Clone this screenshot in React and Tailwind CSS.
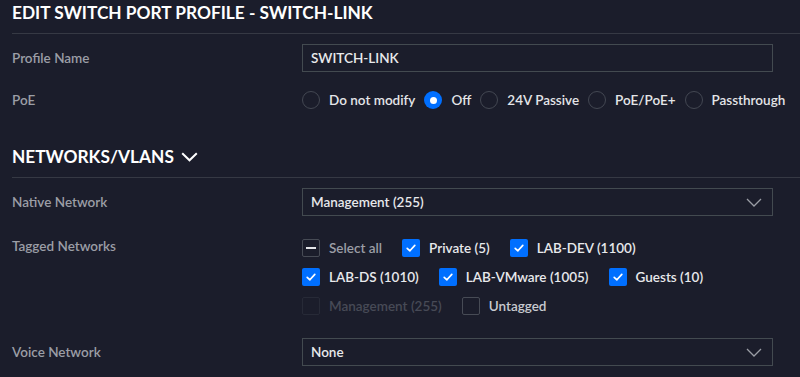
import React from "react";

const Check = () => (
  <svg width="12" height="12" viewBox="0 0 12 12" fill="none">
    <path d="M2.2 6.3 L4.9 8.8 L9.8 3.4" stroke="white" strokeWidth="1.7" strokeLinecap="round" strokeLinejoin="round" />
  </svg>
);

function Box({ state }) {
  if (state === "checked")
    return (
      <span className="w-[18px] h-[18px] shrink-0 rounded-[2px] bg-[#006fff] flex items-center justify-center">
        <Check />
      </span>
    );
  if (state === "indeterminate")
    return (
      <span className="w-[18px] h-[18px] shrink-0 rounded-[2px] border border-[#474b55] flex items-center justify-center">
        <span className="w-[10px] h-[2px] bg-[#e4e5e8]" />
      </span>
    );
  if (state === "disabled")
    return <span className="w-[18px] h-[18px] shrink-0 rounded-[2px] border border-[#272a37]" />;
  return <span className="w-[18px] h-[18px] shrink-0 rounded-[2px] border border-[#474b55]" />;
}

function CheckItem({ state, label, color }) {
  return (
    <div className="flex items-center gap-[9px] mr-[20px] whitespace-nowrap">
      <Box state={state} />
      <span className={`text-[13.5px] font-semibold ${color}`}>{label}</span>
    </div>
  );
}

function Radio({ checked, label }) {
  return (
    <div className="flex items-center gap-[9px] mr-[9px] whitespace-nowrap">
      {checked ? (
        <span className="w-[18px] h-[18px] shrink-0 rounded-full bg-[#006fff] flex items-center justify-center">
          <span className="w-[7px] h-[7px] rounded-full bg-white" />
        </span>
      ) : (
        <span className="w-[18px] h-[18px] shrink-0 rounded-full border border-[#434752]" />
      )}
      <span className="text-[13.5px] font-semibold text-[#e4e5e8]">{label}</span>
    </div>
  );
}

const SelectChevron = () => (
  <svg width="16" height="9" viewBox="0 0 16 9" fill="none">
    <path d="M1 1 L8 8 L15 1" stroke="#9a9da5" strokeWidth="1.3" />
  </svg>
);

function Select({ value }) {
  return (
    <div className="w-[471px] h-[28px] border border-[#434a50] flex items-center justify-between pl-[8px] pr-[10px]">
      <span className="text-[13.5px] font-semibold text-[#e8e9ec]">{value}</span>
      <SelectChevron />
    </div>
  );
}

function Label({ children }) {
  return <div className="w-[290px] shrink-0 text-[13.5px] font-semibold text-[#9b9ea6] whitespace-nowrap">{children}</div>;
}

export default function App() {
  return (
    <div className="w-[800px] h-[377px] overflow-hidden bg-[#1b1d2b] font-['Lato',sans-serif]">
      <div className="ml-3 border-b border-[#363944] pb-[7px]">
        <h1 className="text-[17.3px] leading-[26px] font-bold text-white whitespace-nowrap">
          EDIT SWITCH PORT PROFILE - SWITCH-LINK
        </h1>
      </div>

      <div className="pl-3">
        <div className="flex items-center mt-[10px]">
          <Label>Profile Name</Label>
          <div className="w-[471px] h-[28px] border border-[#434a50] flex items-center pl-[8px]">
            <span className="text-[13.5px] font-semibold text-[#e8e9ec]">SWITCH-LINK</span>
          </div>
        </div>

        <div className="flex items-center mt-[14px] h-[28px]">
          <Label>PoE</Label>
          <div className="flex items-center">
            <Radio label="Do not modify" />
            <Radio checked label="Off" />
            <Radio label="24V Passive" />
            <Radio label="PoE/PoE+" />
            <Radio label="Passthrough" />
          </div>
        </div>
      </div>

      <div className="ml-3 mt-[30px] border-b border-[#363944] pb-[7px] flex items-center gap-[7px]">
        <h2 className="text-[17.3px] leading-[26px] font-bold text-white">NETWORKS/VLANS</h2>
        <svg width="17" height="10" viewBox="0 0 17 10" fill="none">
          <path d="M1.2 1.2 L8.5 8.3 L15.8 1.2" stroke="white" strokeWidth="2" />
        </svg>
      </div>

      <div className="pl-3">
        <div className="flex items-center mt-[10px]">
          <Label>Native Network</Label>
          <Select value="Management (255)" />
        </div>

        <div className="flex mt-[18px]">
          <div className="w-[290px] shrink-0 h-[28px] flex items-center text-[13.5px] font-semibold text-[#9b9ea6] -mt-[2px]">
            Tagged Networks
          </div>
          <div className="flex flex-col gap-y-[1px]">
            <div className="flex items-center h-[28px]">
              <CheckItem state="indeterminate" label="Select all" color="text-[#9b9ea6]" />
              <CheckItem state="checked" label="Private (5)" color="text-[#e8e9ec]" />
              <CheckItem state="checked" label="LAB-DEV (1100)" color="text-[#e8e9ec]" />
            </div>
            <div className="flex items-center h-[28px]">
              <CheckItem state="checked" label="LAB-DS (1010)" color="text-[#e8e9ec]" />
              <CheckItem state="checked" label="LAB-VMware (1005)" color="text-[#e8e9ec]" />
              <CheckItem state="checked" label="Guests (10)" color="text-[#e8e9ec]" />
            </div>
            <div className="flex items-center h-[28px]">
              <CheckItem state="disabled" label="Management (255)" color="text-[#474a56]" />
              <CheckItem state="unchecked" label="Untagged" color="text-[#c9cbd0]" />
            </div>
          </div>
        </div>

        <div className="flex items-center mt-[18px]">
          <Label>Voice Network</Label>
          <Select value="None" />
        </div>
      </div>
    </div>
  );
}
